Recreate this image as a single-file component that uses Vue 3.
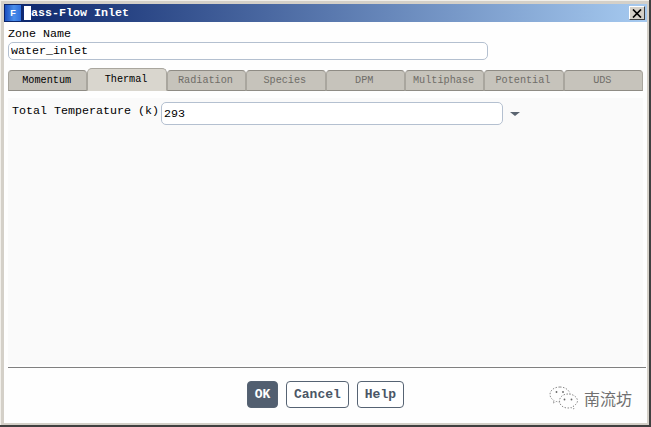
<template>
  <div class="window">
    <div class="titlebar">
      <span class="app-icon">F</span>
      <span class="title"><span class="title-m">M</span>ass-Flow Inlet</span>
      <button class="close-btn" aria-label="Close">
        <svg width="10" height="9" viewBox="0 0 10 9">
          <path d="M1 0.5 L9 8.5 M9 0.5 L1 8.5" stroke="#000" stroke-width="1.7" fill="none" />
        </svg>
      </button>
    </div>

    <div class="body">
      <label class="zone-label">Zone Name</label>
      <input class="field zone-input" value="water_inlet" />

      <div class="tabs">
        <div
          v-for="tab in tabs"
          :key="tab.name"
          class="tab"
          :class="{ 'tab-active': tab.name === 'Thermal', 'tab-off': tab.off }"
        >{{ tab.name }}</div>
      </div>

      <div class="panel">
        <div class="row">
          <span class="row-label">Total Temperature (k)</span>
          <input class="field temp-input" value="293" />
          <span class="caret"></span>
        </div>
      </div>

      <div class="footer">
        <button class="btn btn-ok">OK</button>
        <button class="btn">Cancel</button>
        <button class="btn">Help</button>
      </div>
    </div>

    <!-- watermark -->
    <div class="watermark">
      <svg width="30" height="25" viewBox="0 0 30 25" fill="none" stroke="#8a8a8a" stroke-width="1" stroke-dasharray="1.5 1.5">
        <path d="M11 2 C5 2 1 5.5 1 9.5 C1 12 2.5 14 5 15.5 L4 18 L7.5 16.5 C8.5 16.8 9.5 17 10.5 17" />
        <path d="M11 2 C16 2 20 5 21 8.5" />
        <path d="M19 9 C14 9 10.5 12 10.5 16 C10.5 20 14 23 19 23 C20 23 21 22.8 22 22.5 L25 24 L24.3 21 C26.8 19.8 28.5 18 28.5 16 C28.5 12 24 9 19 9 Z" />
        <circle cx="15.5" cy="14.5" r="0.9" fill="#666" stroke="none" />
        <circle cx="22.5" cy="14.5" r="0.9" fill="#666" stroke="none" />
        <circle cx="7.5" cy="7" r="0.9" fill="#666" stroke="none" />
        <circle cx="14" cy="7" r="0.9" fill="#666" stroke="none" />
      </svg>
      <span class="wm-text">南流坊</span>
    </div>
  </div>
</template>

<script setup>
const tabs = [
  { name: 'Momentum' },
  { name: 'Thermal' },
  { name: 'Radiation', off: true },
  { name: 'Species', off: true },
  { name: 'DPM', off: true },
  { name: 'Multiphase', off: true },
  { name: 'Potential', off: true },
  { name: 'UDS', off: true },
]
</script>

<style>
html, body { margin: 0; padding: 0; background: #fff; }
</style>

<style scoped>
.window {
  position: relative;
  width: 651px;
  height: 427px;
  box-sizing: border-box;
  padding: 4px;
  background: #d4d0c8;
  box-shadow: inset -2px -2px 0 #404040, inset 1px 1px 0 #f1efea;
  font-family: "Liberation Mono", "DejaVu Sans Mono", monospace;
  font-size: 11.67px;
  color: #000;
  display: flex;
  flex-direction: column;
  overflow: hidden;
}

.titlebar {
  flex: none;
  height: 18px;
  display: flex;
  align-items: center;
  padding-left: 1px;
  background: linear-gradient(90deg, #0a246a 0%, #a6caf0 100%);
}
.app-icon {
  width: 16px;
  height: 16px;
  margin-right: 3px;
  background: linear-gradient(90deg, #1a4fc0, #4a8eea 55%, #2f6fdc);
  color: #fff;
  font-family: "Liberation Sans", sans-serif;
  font-weight: 700;
  font-size: 9px;
  line-height: 16px;
  text-align: center;
}
.title {
  color: #fff;
  font-weight: 700;
  font-size: 11.67px;
}
.title-m { background: #fff; }
.close-btn {
  margin-left: auto;
  margin-right: 2px;
  width: 16px;
  height: 14px;
  padding: 0;
  box-sizing: border-box;
  background: #d4d0c8;
  border: 1px solid;
  border-color: #fff #404040 #404040 #fff;
  display: flex;
  align-items: center;
  justify-content: center;
}

.body {
  flex: 1;
  min-height: 0;
  background: #fefefe;
  display: flex;
  flex-direction: column;
  padding: 0 4px;
}
.zone-label {
  height: 20px;
  line-height: 25px;
}
.field {
  box-sizing: border-box;
  font-family: inherit;
  font-size: 11.67px;
  color: #000;
  background: #fff;
  border: 1px solid #b4c0d0;
  border-radius: 5px;
  padding: 0 2px;
  outline: none;
}
.zone-input {
  width: 480px;
  height: 18px;
  flex: none;
}

.tabs {
  flex: none;
  display: flex;
  height: 21px;
  margin-top: 10px;
}
.tab {
  flex: 1 1 0;
  min-width: 0;
  box-sizing: border-box;
  padding-right: 2px;
  background: #c6c3bb;
  border: 1px solid #a9a69e;
  border-top-color: #8f8c85;
  border-bottom-color: #8f8c85;
  border-radius: 4px 4px 0 0;
  text-align: center;
  line-height: 19px;
  font-size: 10.2px;
  overflow: hidden;
}
.tab-off { color: #6f6d68; }
.tab-active {
  height: 23px;
  margin-top: -2px;
  background: #d9d6ce;
  border-color: #a9a69e;
  border-bottom-color: #d9d6ce;
  line-height: 21px;
  border-radius: 5px 5px 0 0;
}

.panel {
  flex: 1;
  min-height: 0;
  margin-top: 7px;
  background: #fafafa;
  padding: 4px 4px 0;
}
.row {
  display: flex;
  align-items: center;
}
.row-label { white-space: pre; height: 23px; line-height: 18px; }
.temp-input {
  width: 342px;
  height: 23px;
  margin-left: 2px;
}
.caret {
  margin-left: 7px;
  width: 0;
  height: 0;
  border-left: 5px solid transparent;
  border-right: 5px solid transparent;
  border-top: 4px solid #5a6470;
}

.footer {
  flex: none;
  height: 56px;
  margin-top: 2px;
  margin-right: -3px;
  border-top: 1px solid #808080;
  box-sizing: border-box;
  display: flex;
  justify-content: center;
  gap: 8px;
  padding-top: 13px;
  padding-right: 3px;
}
.btn {
  height: 27px;
  padding: 0 7px;
  box-sizing: border-box;
  background: #fff;
  border: 1px solid #566373;
  border-radius: 4px;
  color: #4a5666;
  font-family: inherit;
  font-weight: 700;
  font-size: 13px;
}
.btn-ok {
  width: 31px;
  padding: 0;
  background: #525f70;
  color: #fff;
}

.watermark {
  position: absolute;
  right: 19px;
  bottom: 17px;
  display: flex;
  align-items: center;
  gap: 5px;
}
.wm-text {
  font-family: "Noto Sans CJK SC", sans-serif;
  font-size: 16px;
  color: #707070;
}
</style>
